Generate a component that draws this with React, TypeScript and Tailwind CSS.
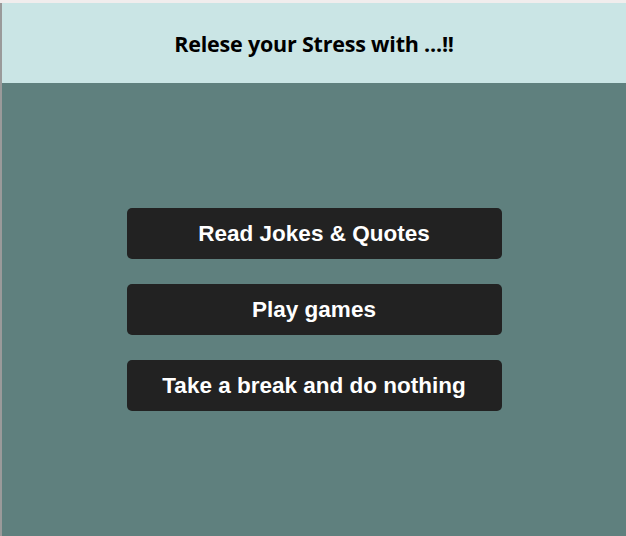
const options = ["Read Jokes & Quotes", "Play games", "Take a break and do nothing"];

function App() {
  return (
    <div className="flex h-[536px] w-[626px] flex-col overflow-hidden bg-[#f1eded]">
      <div className="mt-[3px] flex flex-1 flex-col border-l-2 border-[#9a9a9a]">
        <header className="flex h-[80px] items-center justify-center bg-[#cae5e5]">
          <h1 className="mt-[2px] font-['Open_Sans',sans-serif] text-[21.5px] font-bold tracking-[-0.2px] text-black">
            Relese your Stress with ...!!
          </h1>
        </header>
        <main className="flex flex-1 flex-col items-center gap-[25px] bg-[#5f807e] pt-[125px]">
          {options.map((label) => (
            <button
              key={label}
              className="h-[51px] w-[375px] rounded-[5px] bg-[#222222] font-['Liberation_Sans',Arial,sans-serif] text-[22.5px] font-bold text-white"
            >
              {label}
            </button>
          ))}
        </main>
      </div>
    </div>
  );
}

export default App;
